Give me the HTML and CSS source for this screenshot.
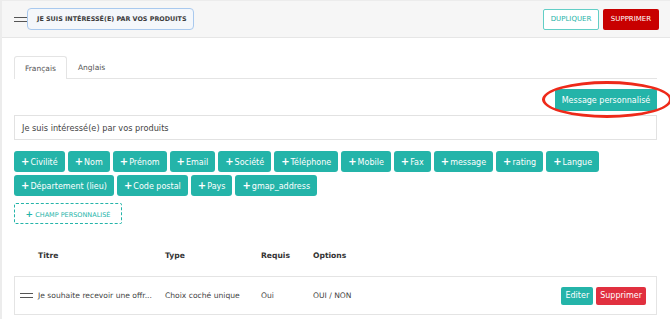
FILE: index.html
```html
<!DOCTYPE html>
<html lang="fr">
<head>
    <meta charset="UTF-8">
    <meta name="viewport" content="width=device-width, initial-scale=1.0">
    <title>Formulaire - Je suis intéressé(e) par vos produits</title>
    <link rel="stylesheet" href="styles.css">
</head>
<body>

    <div class="page">

        <!-- Header -->
        <div class="form-header">
            <span class="handle"></span>
            <div class="title-box">JE SUIS INTÉRESSÉ(E) PAR VOS PRODUITS</div>
            <div class="header-actions">
                <button class="btn-outline">DUPLIQUER</button>
                <button class="btn-danger-dark">SUPPRIMER</button>
            </div>
        </div>

        <div class="form-body">

            <!-- Language tabs -->
            <div class="tabs">
                <div class="tab active">Français</div>
                <div class="tab">Anglais</div>
            </div>

            <div class="message-bar">
                <div class="message-wrap">
                    <button class="btn-teal btn-message">Message personnalisé</button>
                    <span class="highlight-ring"></span>
                </div>
            </div>

            <div class="text-input">Je suis intéressé(e) par vos produits</div>

            <!-- Field chips -->
            <div class="chips">
                <button class="chip">Civilité</button>
                <button class="chip">Nom</button>
                <button class="chip">Prénom</button>
                <button class="chip">Email</button>
                <button class="chip">Société</button>
                <button class="chip">Téléphone</button>
                <button class="chip">Mobile</button>
                <button class="chip">Fax</button>
                <button class="chip">message</button>
                <button class="chip">rating</button>
                <button class="chip">Langue</button>
                <button class="chip">Département (lieu)</button>
                <button class="chip">Code postal</button>
                <button class="chip">Pays</button>
                <button class="chip">gmap_address</button>
            </div>

            <button class="btn-custom-field"><span class="plus">+</span> CHAMP PERSONNALISÉ</button>

            <!-- Fields table -->
            <div class="fields-table">
                <div class="table-row table-head">
                    <span></span>
                    <span>Titre</span>
                    <span>Type</span>
                    <span>Requis</span>
                    <span>Options</span>
                    <span></span>
                </div>
                <div class="table-row table-item">
                    <span class="handle small"></span>
                    <span>Je souhaite recevoir une offr...</span>
                    <span>Choix coché unique</span>
                    <span>Oui</span>
                    <span>OUI / NON</span>
                    <span class="row-actions">
                        <button class="btn-teal btn-sm">Editer</button>
                        <button class="btn-danger btn-sm">Supprimer</button>
                    </span>
                </div>
            </div>

        </div>
    </div>

</body>
</html>
```

FILE: styles.css
```css
/* Basic Reset */
* {
    margin: 0;
    padding: 0;
    box-sizing: border-box;
}

body {
    font-family: 'DejaVu Sans', 'Noto Sans', sans-serif;
    background: #fff;
    color: #444;
    width: 670px;
    height: 319px;
    overflow: hidden;
}

button {
    font-family: inherit;
    border: none;
    cursor: pointer;
}

.page {
    border-left: 2px solid #ececec;
    border-top: 1px solid #ececec;
    height: 100%;
}

/* Header */
.form-header {
    display: flex;
    align-items: center;
    height: 37px;
    background: #f6f6f6;
    border-bottom: 1px solid #e6e6e6;
    padding: 0 11px 0 12px;
}

.handle {
    display: inline-block;
    width: 14px;
    height: 5px;
    border-top: 1.5px solid #555;
    border-bottom: 1.5px solid #555;
}

.title-box {
    margin-left: -1px;
    height: 22px;
    width: 167px;
    padding: 0 9px;
    border: 1.5px solid #a9c9ee;
    border-radius: 4px;
    background: #f4f7fb;
    font-size: 6.4px;
    font-weight: bold;
    color: #3d3d3d;
    display: flex;
    align-items: center;
    white-space: nowrap;
}

.header-actions {
    margin-left: auto;
    display: flex;
    gap: 4px;
}

.btn-outline {
    height: 21px;
    width: 56px;
    background: #fff;
    border: 1px solid #62cec6;
    border-radius: 2px;
    color: #26b3a8;
    font-size: 7px;
}

.btn-danger-dark {
    height: 21px;
    width: 56px;
    background: #c80000;
    border-radius: 2px;
    color: #fff;
    font-size: 7px;
}

/* Body */
.form-body {
    padding: 18px 13px 0 12px;
}

.tabs {
    display: flex;
    border-bottom: 1px solid #e4e4e4;
    height: 23px;
}

.tab {
    padding: 0 10px;
    font-size: 7.5px;
    color: #555;
    display: flex;
    align-items: center;
    border: 1px solid transparent;
    border-bottom: none;
    border-radius: 3px 3px 0 0;
}

.tab.active {
    border-color: #e4e4e4;
    background: #fff;
    margin-bottom: -1px;
}

.message-bar {
    display: flex;
    justify-content: flex-end;
    padding-top: 10px;
}

.message-wrap {
    position: relative;
}

.btn-teal {
    background: #24b4a9;
    color: #fff;
    border-radius: 2px;
}

.btn-message {
    height: 22px;
    width: 102px;
    font-size: 8px;
    display: block;
}

/* Red annotation ring drawn over the button */
.highlight-ring {
    position: absolute;
    left: -13px;
    top: -8px;
    width: 130px;
    height: 37px;
    border: 3.5px solid #ee2a1a;
    border-radius: 50%;
    pointer-events: none;
}

.text-input {
    margin-top: 4px;
    height: 25px;
    border: 1px solid #e2e2e2;
    padding: 0 7px;
    font-size: 8.2px;
    color: #444;
    display: flex;
    align-items: center;
}

/* Chips */
.chips {
    display: flex;
    flex-wrap: wrap;
    gap: 3px 3px;
    margin-top: 11px;
    width: 600px;
}

.chip {
    height: 21px;
    padding: 0 7px;
    background: #24b4a9;
    color: #fff;
    border-radius: 3px;
    font-size: 8px;
}

.chip::before {
    content: "+";
    font-weight: bold;
    font-size: 10px;
    margin-right: 1px;
    vertical-align: -0.5px;
}

.btn-custom-field {
    margin-top: 7px;
    height: 21px;
    width: 108px;
    background: #fff;
    border: 1.5px dashed #24b4a9;
    border-radius: 2px;
    color: #24b4a9;
    font-size: 6.5px;
}

.btn-custom-field .plus {
    font-weight: bold;
    font-size: 9px;
}

/* Fields table */
.fields-table {
    margin-top: 21px;
}

.table-row {
    display: grid;
    grid-template-columns: 18px 127px 96px 52px 1fr auto;
    align-items: center;
    padding: 0 10px 0 5px;
    font-size: 7.6px;
    border: 1px solid transparent;
    white-space: nowrap;
}

.table-head {
    height: 20px;
    font-weight: bold;
    color: #333;
}

.table-item {
    margin-top: 11px;
    height: 39px;
    border-color: #e4e4e4;
    color: #444;
}

.handle.small {
    width: 13px;
}

.row-actions {
    display: flex;
    gap: 3px;
}

.btn-sm {
    height: 18px;
    padding: 0 4px;
    font-size: 8px;
    border-radius: 2px;
}

.btn-danger {
    background: #e1303f;
    color: #fff;
}
```
